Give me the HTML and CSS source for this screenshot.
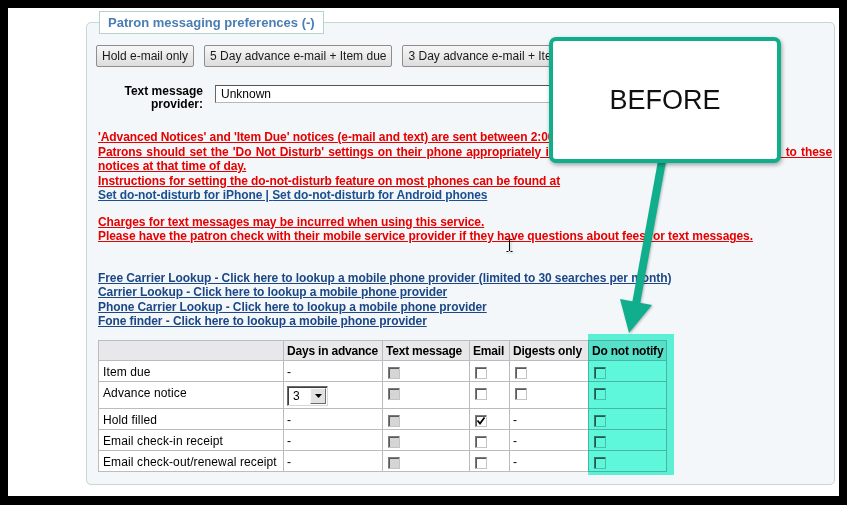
FILE: index.html
```html
<!DOCTYPE html>
<html lang="en">
<head>
<meta charset="utf-8">
<title>Patron messaging preferences</title>
<link rel="stylesheet" href="styles.css">
</head>
<body>
<div class="screen">
  <fieldset class="prefs">
    <legend>Patron messaging preferences (-)</legend>
    <div class="presets">
      <button class="btn">Hold e-mail only</button>
      <button class="btn">5 Day advance e-mail + Item due</button>
      <button class="btn">3 Day advance e-mail + Item due</button>
    </div>
    <div class="provider">
      <label class="provider-label">Text message provider:</label>
      <div class="textbox">Unknown</div>
    </div>
    <div class="notices">
      <span class="warn">'Advanced Notices' and 'Item Due' notices (e-mail and text) are sent between 2:00 a.m. and 3:00 a.m.</span><br>
      <span class="warn">Patrons should set the 'Do Not Disturb' settings on their phone appropriately if they do not wish to receive text replies to these notices at that time of day.</span><br>
      <span class="warn">Instructions for setting the do-not-disturb feature on most phones can be found at</span><br>
      <a class="link" href="#">Set do-not-disturb for iPhone | </a><a class="link" href="#">Set do-not-disturb for Android phones</a>
    </div>
    <div class="notices charges">
      <span class="warn">Charges for text messages may be incurred when using this service.</span><br>
      <span class="warn">Please have the patron check with their mobile service provider if they have questions about fees for text messages.</span>
    </div>
    <div class="notices lookups">
      <a class="link dark" href="#">Free Carrier Lookup - Click here to lookup a mobile phone provider (limited to 30 searches per month</a><span class="dark">)</span><br>
      <a class="link dark" href="#">Carrier Lookup - Click here to lookup a mobile phone provider</a><br>
      <a class="link dark" href="#">Phone Carrier Lookup - Click here to lookup a mobile phone provider</a><br>
      <a class="link dark last" href="#">Fone finder - Click here to lookup a mobile phone provider</a>
    </div>
    <div class="grid-wrap">
      <table class="grid">
        <colgroup>
          <col class="c-name"><col class="c-days"><col class="c-text"><col class="c-email"><col class="c-digest"><col class="c-dnn">
        </colgroup>
        <thead>
          <tr><th></th><th>Days in advance</th><th>Text message</th><th>Email</th><th>Digests only</th><th>Do not notify</th></tr>
        </thead>
        <tbody>
          <tr>
            <td>Item due</td><td>-</td>
            <td><span class="cb disabled"></span></td>
            <td><span class="cb"></span></td>
            <td><span class="cb"></span></td>
            <td><span class="cb"></span></td>
          </tr>
          <tr>
            <td>Advance notice</td>
            <td><span class="select"><span class="select-value">3</span><span class="select-btn"><svg width="7" height="4" viewBox="0 0 7 4"><polygon points="0,0 7,0 3.5,4" fill="#000"/></svg></span></span></td>
            <td><span class="cb disabled"></span></td>
            <td><span class="cb"></span></td>
            <td><span class="cb"></span></td>
            <td><span class="cb"></span></td>
          </tr>
          <tr>
            <td>Hold filled</td><td>-</td>
            <td><span class="cb disabled"></span></td>
            <td><span class="cb"><svg class="tick" width="10" height="10" viewBox="0 0 10 10"><path d="M1.5 4.5 L4 7.5 L8.5 1.5" fill="none" stroke="#000" stroke-width="1.8"/></svg></span></td>
            <td>-</td>
            <td><span class="cb"></span></td>
          </tr>
          <tr>
            <td>Email check-in receipt</td><td>-</td>
            <td><span class="cb disabled"></span></td>
            <td><span class="cb"></span></td>
            <td>-</td>
            <td><span class="cb"></span></td>
          </tr>
          <tr>
            <td>Email check-out/renewal receipt</td><td>-</td>
            <td><span class="cb disabled"></span></td>
            <td><span class="cb"></span></td>
            <td>-</td>
            <td><span class="cb"></span></td>
          </tr>
        </tbody>
      </table>
      <div class="highlight"></div>
    </div>
  </fieldset>

  <svg class="annot" viewBox="8 8 831 488" width="831" height="488">
    <line x1="664" y1="150" x2="636" y2="304" stroke="#10ae8c" stroke-width="8"/>
    <polygon points="620,299 652,305 629,333" fill="#10ae8c"/>
    <path d="M506.5 239.5 h2 M510.5 239.5 h2 M509.5 240 v11 M506.5 251.5 h2 M510.5 251.5 h2" stroke="#000" stroke-width="1" fill="none"/>
  </svg>
  <div class="callout">BEFORE</div>
</div>
</body>
</html>
```

FILE: styles.css
```css
body {
  margin: 0;
  background: #000;
  font-family: "Liberation Sans", Arial, sans-serif;
  font-size: 12px;
  color: #000;
}

.screen {
  position: relative;
  margin: 8px 0 0 8px;
  width: 831px;
  height: 488px;
  box-sizing: border-box;
  padding: 3px 0 0 78px;
  background: #fff;
  overflow: hidden;
}

.prefs {
  margin: 0;
  min-width: 0;
  width: 749px;
  box-sizing: border-box;
  border: 1px solid #c5d8d4;
  border-radius: 5px;
  background: #f4f7fa;
  padding: 11px 2px 12px 9px;
}

.prefs legend {
  margin-left: 3px;
  padding: 0 8px;
  height: 23px;
  box-sizing: border-box;
  border: 1px solid #b6d3cd;
  background: #fff;
  font-weight: bold;
  font-size: 13px;
  line-height: 21px;
  color: #4a7db3;
}

.presets {
  display: flex;
  gap: 10px;
  height: 22px;
}

.btn {
  margin: 0;
  height: 22px;
  padding: 0 5px;
  border: 1px solid #8e8e8e;
  border-radius: 2px;
  background: linear-gradient(#f7f7f7, #dddddd);
  font: 12px "Liberation Sans", Arial, sans-serif;
  color: #1a1a1a;
  white-space: nowrap;
}

.provider {
  display: flex;
  align-items: flex-start;
  margin: 18px 0 0 25px;
}

.provider-label {
  width: 82px;
  text-align: right;
  font-weight: bold;
  line-height: 13px;
}

.textbox {
  margin-left: 12px;
  width: 420px;
  height: 18px;
  box-sizing: border-box;
  border: 1px solid #b8b8b8;
  border-top-color: #555;
  border-left-color: #666;
  background: #fff;
  padding-left: 5px;
  line-height: 16px;
}

.notices {
  margin: 19px 0 0 2px;
  line-height: 14.5px;
  font-weight: bold;
  letter-spacing: -0.08px;
  text-align: justify;
}

.charges { margin-top: 12px; }
.lookups { margin-top: 27px; }

.warn {
  color: #e60000;
  text-decoration: underline;
}

.link {
  color: #1b4f8f;
  text-decoration: underline;
}

.dark { color: #1c4786; }

.grid-wrap {
  position: relative;
  width: max-content;
  margin: 11.5px 0 0 2px;
}

.grid {
  border-collapse: collapse;
  table-layout: fixed;
  width: 569px;
}

.c-name { width: 185px; }
.c-days { width: 99px; }
.c-text { width: 87px; }
.c-email { width: 40px; }
.c-digest { width: 79px; }
.c-dnn { width: 78px; }

.grid th,
.grid td {
  border: 1px solid #bcbcbc;
  padding: 4px 2px 2px 3px;
  line-height: 14px;
  vertical-align: top;
  text-align: left;
  white-space: nowrap;
  overflow: visible;
}

.grid th {
  background: #e8e8ea;
  padding-top: 3px;
  letter-spacing: -0.2px;
}

.grid td {
  background: #fff;
  letter-spacing: 0.12px;
}

.grid td:first-child { padding-left: 4px; }

.cb {
  display: inline-block;
  position: relative;
  vertical-align: top;
  width: 12px;
  height: 12px;
  margin: 2px 0 0 2px;
  box-sizing: border-box;
  border: 1px solid;
  border-color: #7c7c7c #c4c4c4 #c4c4c4 #7c7c7c;
  box-shadow: inset 1px 1px 0 #5a5a5a;
  background: #fff;
}

.cb.disabled { background: #d5d5d5; }

.cb .tick {
  position: absolute;
  left: 0;
  top: 0;
}

.select {
  display: inline-flex;
  vertical-align: top;
  width: 41px;
  height: 20px;
  box-sizing: border-box;
  border: 1px solid;
  border-color: #6a6a6a #d8d8d8 #d8d8d8 #6a6a6a;
  box-shadow: inset 1px 1px 0 #3f3f3f;
  background: #fff;
}

.select-value {
  flex: 1;
  padding-left: 5px;
  line-height: 18px;
}

.select-btn {
  display: flex;
  align-items: center;
  justify-content: center;
  width: 16px;
  height: 16px;
  margin: 1px 1px 0 0;
  box-sizing: border-box;
  border: 1px solid;
  border-color: #fafafa #6b6b6b #6b6b6b #fafafa;
  background: #e2e2e2;
}

.highlight {
  position: absolute;
  left: 490px;
  top: -6px;
  width: 86px;
  height: 141px;
  background: #5ff7db;
  mix-blend-mode: multiply;
}

.annot {
  position: absolute;
  left: 0;
  top: 0;
  pointer-events: none;
  filter: drop-shadow(1px 1px 1px rgba(0, 0, 0, 0.25));
}

.callout {
  position: absolute;
  left: 541px;
  top: 29px;
  width: 232px;
  height: 126px;
  box-sizing: border-box;
  border: 4px solid #11ae8c;
  border-radius: 7px;
  background: #fff;
  box-shadow: 1px 2px 4px rgba(0, 0, 0, 0.35);
  display: flex;
  align-items: center;
  justify-content: center;
  font-size: 27px;
  color: #111;
}
```
